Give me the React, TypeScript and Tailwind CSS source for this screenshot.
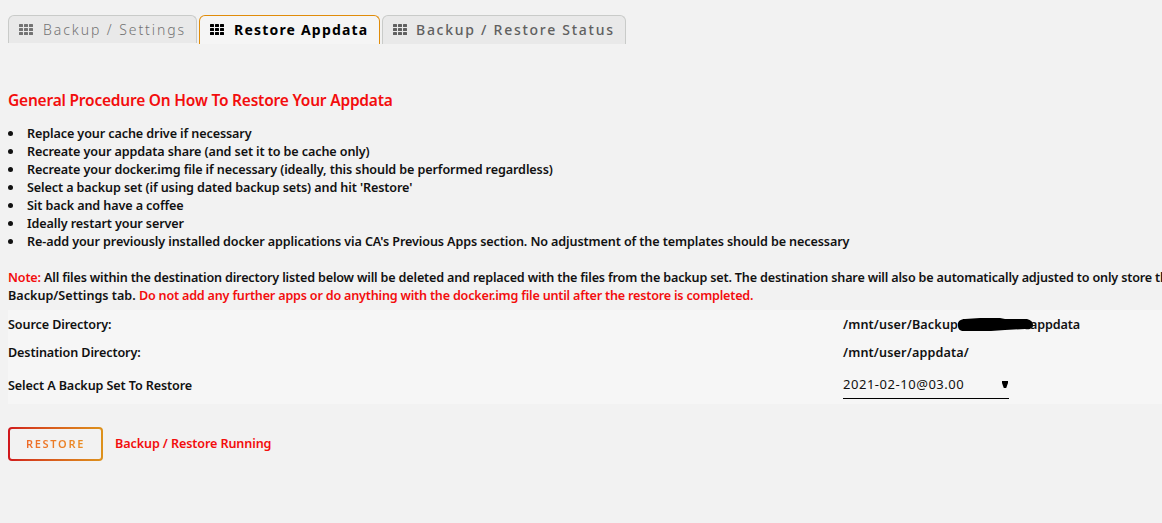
import { ReactNode } from "react";

interface TabProps {
  label: string;
  className: string;
  labelClass: string;
}

const STEPS = [
  "Replace your cache drive if necessary",
  "Recreate your appdata share (and set it to be cache only)",
  "Recreate your docker.img file if necessary (ideally, this should be performed regardless)",
  "Select a backup set (if using dated backup sets) and hit 'Restore'",
  "Sit back and have a coffee",
  "Ideally restart your server",
  "Re-add your previously installed docker applications via CA's Previous Apps section. No adjustment of the templates should be necessary",
];

function GridIcon() {
  return (
    <svg width="14" height="11" viewBox="0 0 14 11" fill="currentColor" className="mb-px shrink-0">
      {[0, 4, 8].map((y) =>
        [0, 5, 10].map((x) => (
          <rect key={`${x}-${y}`} x={x} y={y} width="4" height="3" rx="0.5" />
        ))
      )}
    </svg>
  );
}

function Tab({ label, className, labelClass }: TabProps) {
  return (
    <button
      type="button"
      className={`flex shrink-0 items-center rounded-t-[6px] border border-b-0 ${className}`}
    >
      <GridIcon />
      <span className={`whitespace-nowrap text-[14px] leading-[18px] ${labelClass}`}>
        {label}
      </span>
    </button>
  );
}

function Row({ label, className, children }: { label: string; className: string; children: ReactNode }) {
  return (
    <div className={`flex items-center ${className}`}>
      <div className="w-[835px] shrink-0">{label}</div>
      {children}
    </div>
  );
}

export default function App() {
  return (
    <div className="h-[523px] w-full overflow-hidden bg-[#f2f2f2] pl-2 pt-[15px] font-['Noto_Sans',sans-serif] text-[12.6px] font-semibold leading-[18px] tracking-[-0.11px] text-[#111111]">
      <div className="flex h-[29px] gap-[2px]">
        <Tab
          label="Backup / Settings"
          className="h-[28px] w-[189px] gap-[10px] border-[#c9cbc9] bg-[#e9e9e9] pl-[10px] text-[#737373]"
          labelClass="font-light tracking-[1.93px]"
        />
        <Tab
          label="Restore Appdata"
          className="h-[29px] w-[181px] gap-[10px] border-[#e08c0a] bg-[#f5f5f5] pl-[10px] text-black"
          labelClass="font-bold tracking-[1.2px]"
        />
        <Tab
          label="Backup / Restore Status"
          className="h-[29px] w-[244px] gap-[9px] border-[#c9cbc9] bg-[#e9e9e9] pl-[10px] text-[#606060]"
          labelClass="font-medium tracking-[1.73px]"
        />
      </div>

      <h2 className="mt-[46px] whitespace-nowrap text-[15.5px] leading-5 tracking-[-0.21px] text-[#f30d0d]">
        General Procedure On How To Restore Your Appdata
      </h2>

      <ul className="mt-[15px]">
        {STEPS.map((step) => (
          <li key={step} className="flex h-[18px] items-center whitespace-nowrap">
            <span className="mb-[2px] mr-[14px] size-[5px] shrink-0 rounded-full bg-[#111111]" />
            {step}
          </li>
        ))}
      </ul>

      <div className="mt-[18px] whitespace-nowrap">
        <p className="tracking-[-0.17px]">
          <span className="text-[#f30d0d]">Note:</span> All files within the destination directory
          listed below will be deleted and replaced with the files from the backup set. The
          destination share will also be automatically adjusted to only store th
        </p>
        <p className="tracking-[-0.2px]">
          <span className="tracking-[0px]">Backup/Settings tab. </span>
          <span className="text-[#f30d0d]">
            Do not add any further apps or do anything with the docker.img file until after the
            restore is completed.
          </span>
        </p>
      </div>

      <div className="mt-[5px] h-[94px] bg-[#f6f6f6] pt-px">
        <Row label="Source Directory:" className="h-[27px]">
          <span className="w-[116px] shrink-0 tracking-[0.15px]">/mnt/user/Backup</span>
          <svg width="76" height="16" viewBox="0 0 76 16" className="-ml-[2px] shrink-0">
            <path
              d="M1 9C0 5 3 2 8 2L23 1L43 1L48 2L70 2C74 3 76 5 76 8C76 11 73 13 68 12L48 13L34 14L7 14C3 14 1 12 1 9Z"
              fill="#000"
            />
          </svg>
          <span className="-ml-[3px]">appdata</span>
        </Row>
        <Row label="Destination Directory:" className="h-[29px]">
          <span className="tracking-[0.15px]">/mnt/user/appdata/</span>
        </Row>
        <Row label="Select A Backup Set To Restore" className="h-[37px]">
          <button
            type="button"
            className="mb-px flex h-[28px] w-[166px] items-center justify-between border-b border-black pb-px text-left text-[13px] font-normal"
          >
            <span className="tracking-[0.53px]">2021-02-10@03.00</span>
            <svg width="6" height="7" viewBox="0 0 6 7" className="mr-px">
              <path d="M0 0H6V2L4.2 7H1.8L0 2Z" fill="#000" />
            </svg>
          </button>
        </Row>
      </div>

      <div className="mt-[23px] flex items-center">
        <button
          type="button"
          className="h-[34px] w-[95px] rounded-[4px] bg-linear-to-r from-[#d0141c] to-[#dd921c] p-[2px]"
        >
          <span className="flex h-full items-center justify-center rounded-[2px] bg-[#f2f2f2]">
            <span className="bg-linear-to-r from-[#ee6a28] to-[#e98d22] bg-clip-text text-[11px] font-semibold tracking-[1.7px] text-transparent">
              RESTORE
            </span>
          </span>
        </button>
        <span className="ml-3 text-[#f30d0d]">Backup / Restore Running</span>
      </div>
    </div>
  );
}
